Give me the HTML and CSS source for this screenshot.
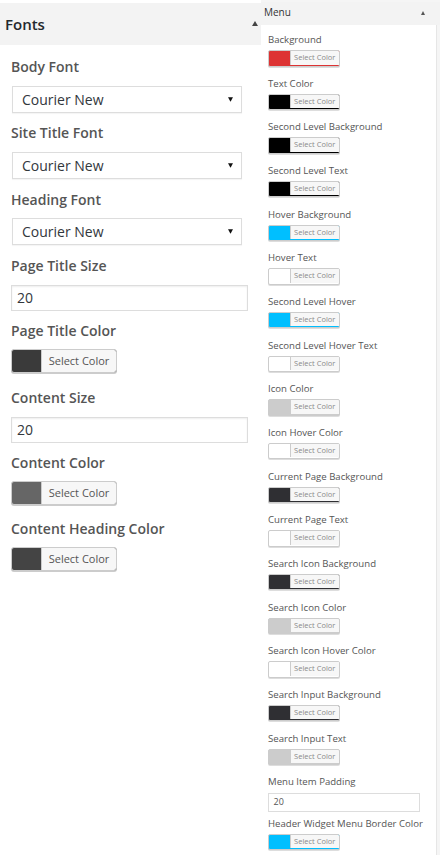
FILE: index.html
```html
<!DOCTYPE html>
<html lang="en">
<head>
<meta charset="utf-8">
<title>Customizer</title>
<link rel="stylesheet" href="styles.css">
</head>
<body>
<div class="page">
  <section class="fonts">
    <header class="fonts-head">
      <h3 class="fonts-title">Fonts</h3>
      <span class="toggle"></span>
    </header>
    <ul class="fonts-list">
      <li class="item item-select">
        <label class="lbl">Body Font</label>
        <div class="select"><span>Courier New</span><svg class="caret" width="5" height="5" viewBox="0 0 5 5"><polygon points="0,0.3 5,0.3 2.5,4.8" fill="#111"/></svg></div>
      </li>
      <li class="item item-select">
        <label class="lbl">Site Title Font</label>
        <div class="select"><span>Courier New</span><svg class="caret" width="5" height="5" viewBox="0 0 5 5"><polygon points="0,0.3 5,0.3 2.5,4.8" fill="#111"/></svg></div>
      </li>
      <li class="item item-select">
        <label class="lbl">Heading Font</label>
        <div class="select"><span>Courier New</span><svg class="caret" width="5" height="5" viewBox="0 0 5 5"><polygon points="0,0.3 5,0.3 2.5,4.8" fill="#111"/></svg></div>
      </li>
      <li class="item item-input">
        <label class="lbl">Page Title Size</label>
        <div class="input">20</div>
      </li>
      <li class="item item-color">
        <label class="lbl">Page Title Color</label>
        <div class="cbtn" style="background:#3a3a3a"><span class="cbtn-txt">Select Color</span></div>
      </li>
      <li class="item item-input">
        <label class="lbl">Content Size</label>
        <div class="input">20</div>
      </li>
      <li class="item item-color">
        <label class="lbl">Content Color</label>
        <div class="cbtn" style="background:#666666"><span class="cbtn-txt">Select Color</span></div>
      </li>
      <li class="item item-color">
        <label class="lbl">Content Heading Color</label>
        <div class="cbtn" style="background:#444444"><span class="cbtn-txt">Select Color</span></div>
      </li>
    </ul>
  </section>

  <aside class="side">
    <header class="menu-head">
      <h3 class="menu-title">Menu</h3>
      <span class="toggle-sm"></span>
    </header>
    <ul class="menu-list">
      <li class="m-item"><label class="m-lbl">Background</label><div class="m-btn" style="background:#dd3333"><span class="m-btn-txt">Select Color</span></div></li>
      <li class="m-item"><label class="m-lbl">Text Color</label><div class="m-btn" style="background:#000000"><span class="m-btn-txt">Select Color</span></div></li>
      <li class="m-item"><label class="m-lbl">Second Level Background</label><div class="m-btn" style="background:#000000"><span class="m-btn-txt">Select Color</span></div></li>
      <li class="m-item"><label class="m-lbl">Second Level Text</label><div class="m-btn" style="background:#000000"><span class="m-btn-txt">Select Color</span></div></li>
      <li class="m-item"><label class="m-lbl">Hover Background</label><div class="m-btn" style="background:#00bfff"><span class="m-btn-txt">Select Color</span></div></li>
      <li class="m-item"><label class="m-lbl">Hover Text</label><div class="m-btn" style="background:#ffffff"><span class="m-btn-txt">Select Color</span></div></li>
      <li class="m-item"><label class="m-lbl">Second Level Hover</label><div class="m-btn" style="background:#00bfff"><span class="m-btn-txt">Select Color</span></div></li>
      <li class="m-item"><label class="m-lbl">Second Level Hover Text</label><div class="m-btn" style="background:#ffffff"><span class="m-btn-txt">Select Color</span></div></li>
      <li class="m-item"><label class="m-lbl">Icon Color</label><div class="m-btn" style="background:#cccccc"><span class="m-btn-txt">Select Color</span></div></li>
      <li class="m-item"><label class="m-lbl">Icon Hover Color</label><div class="m-btn" style="background:#ffffff"><span class="m-btn-txt">Select Color</span></div></li>
      <li class="m-item"><label class="m-lbl">Current Page Background</label><div class="m-btn" style="background:#2f2f33"><span class="m-btn-txt">Select Color</span></div></li>
      <li class="m-item"><label class="m-lbl">Current Page Text</label><div class="m-btn" style="background:#ffffff"><span class="m-btn-txt">Select Color</span></div></li>
      <li class="m-item"><label class="m-lbl">Search Icon Background</label><div class="m-btn" style="background:#2f2f33"><span class="m-btn-txt">Select Color</span></div></li>
      <li class="m-item"><label class="m-lbl">Search Icon Color</label><div class="m-btn" style="background:#cccccc"><span class="m-btn-txt">Select Color</span></div></li>
      <li class="m-item"><label class="m-lbl">Search Icon Hover Color</label><div class="m-btn" style="background:#ffffff"><span class="m-btn-txt">Select Color</span></div></li>
      <li class="m-item"><label class="m-lbl">Search Input Background</label><div class="m-btn" style="background:#2f2f33"><span class="m-btn-txt">Select Color</span></div></li>
      <li class="m-item"><label class="m-lbl">Search Input Text</label><div class="m-btn" style="background:#cccccc"><span class="m-btn-txt">Select Color</span></div></li>
      <li class="m-item m-item-input"><label class="m-lbl">Menu Item Padding</label><div class="m-input">20</div></li>
      <li class="m-item"><label class="m-lbl">Header Widget Menu Border Color</label><div class="m-btn" style="background:#00bfff"><span class="m-btn-txt">Select Color</span></div></li>
    </ul>
  </aside>
</div>
</body>
</html>
```

FILE: styles.css
```css
* { box-sizing: border-box; }

html, body {
  margin: 0;
  padding: 0;
  background: #ffffff;
  font-family: "Open Sans", "Noto Sans", sans-serif;
}

.page {
  display: flex;
  width: 440px;
  height: 855px;
  overflow: hidden;
}

/* ---------- Left: Fonts panel ---------- */
.fonts {
  width: 261px;
  flex: none;
  padding-top: 3px;
}

.fonts-head {
  height: 42px;
  background: #f3f3f3;
  display: flex;
  align-items: center;
  justify-content: space-between;
  padding: 0 3px 0 5px;
}

.fonts-title {
  margin: 0;
  font-size: 15px;
  font-weight: 600;
  color: #23282d;
  line-height: 20px;
}

.toggle {
  width: 0;
  height: 0;
  border-left: 3.5px solid transparent;
  border-right: 3.5px solid transparent;
  border-bottom: 5px solid #444;
  margin-top: -1px;
}

.fonts-list {
  list-style: none;
  margin: 0;
  padding: 10.3px 0 0 11px;
}

.lbl {
  display: block;
  font-size: 14px;
  line-height: 24px;
  font-weight: 600;
  color: #555555;
}

.item-select { margin-bottom: 8.5px; }
.item-input { margin-bottom: 7.8px; }
.item-color { margin-bottom: 12.4px; }

.select {
  margin: 6.7px 0 0 1px;
  width: 230px;
  height: 27px;
  border: 1px solid #dddddd;
  background: #fff;
  display: flex;
  align-items: center;
  justify-content: space-between;
  padding: 0 8.5px 0 9px;
  font-size: 14px;
  color: #32373c;
  box-shadow: 0 1px 1px rgba(0,0,0,0.04);
}

.caret { display: block; }

.input {
  margin-top: 7px;
  width: 237px;
  height: 26.5px;
  border: 1px solid #dddddd;
  background: #fff;
  padding-left: 5px;
  font-size: 14px;
  line-height: 24px;
  color: #32373c;
  box-shadow: inset 0 1px 2px rgba(0,0,0,0.07);
}

.cbtn {
  margin-top: 6px;
  width: 106px;
  height: 24px;
  border: 1px solid #cccccc;
  border-radius: 3px;
  box-shadow: 0 1px 0 #cccccc;
  display: flex;
  justify-content: flex-end;
  overflow: hidden;
}

.cbtn-txt {
  width: 75px;
  height: 22px;
  background: #f7f7f7;
  border-left: 1px solid #cccccc;
  font-size: 11px;
  line-height: 22px;
  color: #555555;
  text-align: center;
}

/* ---------- Right: Menu panel ---------- */
.side {
  width: 179px;
  flex: none;
  padding-top: 2px;
  background: #f5f5f5;
}

.menu-head {
  height: 23px;
  background: #f3f3f3;
  display: flex;
  align-items: center;
  justify-content: space-between;
  padding: 0 15px 2px 3px;
}

.menu-title {
  margin: 0;
  font-size: 10px;
  font-weight: 400;
  color: #333333;
  line-height: 13px;
}

.toggle-sm {
  width: 0;
  height: 0;
  border-left: 2.5px solid transparent;
  border-right: 2.5px solid transparent;
  border-bottom: 4px solid #555;
}

.menu-list {
  list-style: none;
  margin: 0;
  width: 176px;
  height: 830px;
  background: #ffffff;
  border-right: 1px solid #e6e6e6;
  padding: 8px 0 0 7px;
}

.m-item { margin-bottom: 10.17px; }
.m-item-input { margin-bottom: 5px; }

.m-lbl {
  display: block;
  font-size: 9.6px;
  line-height: 13px;
  font-weight: 400;
  color: #555555;
  white-space: nowrap;
}

.m-btn {
  margin-top: 4px;
  width: 72px;
  height: 16.5px;
  border: 1px solid #cccccc;
  border-radius: 2px;
  box-shadow: 0 1px 0 #dddddd;
  display: flex;
  justify-content: flex-end;
  align-items: flex-start;
  overflow: hidden;
}

.m-btn-txt {
  width: 49.5px;
  height: 13.5px;
  background: #f7f7f7;
  border-left: 1px solid #cccccc;
  font-size: 7.5px;
  line-height: 13.5px;
  color: #8a8a8a;
  text-align: center;
}

.m-input {
  margin-top: 5px;
  width: 152px;
  height: 18.4px;
  border: 1px solid #dddddd;
  background: #fff;
  padding-left: 4.5px;
  font-size: 9px;
  line-height: 16px;
  color: #555555;
}
```
